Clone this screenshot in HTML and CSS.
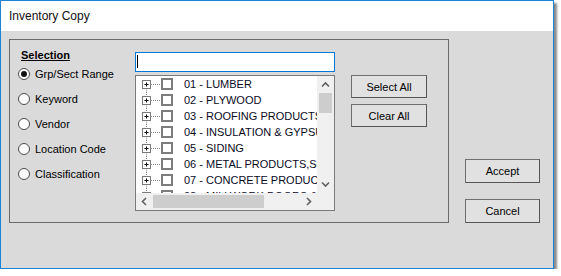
FILE: index.html
```html
<!DOCTYPE html>
<html lang="en">
<head>
  <meta charset="UTF-8">
  <title>Inventory Copy</title>
  <link rel="stylesheet" href="styles.css">
</head>
<body>

<div class="window">
  <div class="titlebar">Inventory Copy</div>

  <div class="client">
    <div class="group">
      <div class="selcol">
        <div class="sel-label">Selection</div>
        <div class="radio-row"><span class="radio checked"></span>Grp/Sect Range</div>
        <div class="radio-row"><span class="radio"></span>Keyword</div>
        <div class="radio-row"><span class="radio"></span>Vendor</div>
        <div class="radio-row"><span class="radio"></span>Location Code</div>
        <div class="radio-row"><span class="radio"></span>Classification</div>
      </div>

      <div class="midcol">
        <div class="search"><span class="caret"></span></div>
        <div class="tree">
          <div class="rows">
            <div class="node first">
              <svg class="exp" width="24" height="16" viewBox="0 0 24 16"><path d="M10.5 12.5V16M15 8.5H24" stroke="#8c8c8c" stroke-dasharray="1 1" fill="none"/><rect x="6.5" y="4.5" width="8" height="8" fill="#fff" stroke="#7a7a7a"/><path d="M8.5 8.5h4M10.5 6.5v4" stroke="#000"/></svg>
              <span class="check"></span><span class="label">01 - LUMBER</span>
            </div>
            <div class="node">
              <svg class="exp" width="24" height="16" viewBox="0 0 24 16"><path d="M10.5 0V4.5M10.5 12.5V16M15 8.5H24" stroke="#8c8c8c" stroke-dasharray="1 1" fill="none"/><rect x="6.5" y="4.5" width="8" height="8" fill="#fff" stroke="#7a7a7a"/><path d="M8.5 8.5h4M10.5 6.5v4" stroke="#000"/></svg>
              <span class="check"></span><span class="label">02 - PLYWOOD</span>
            </div>
            <div class="node">
              <svg class="exp" width="24" height="16" viewBox="0 0 24 16"><path d="M10.5 0V4.5M10.5 12.5V16M15 8.5H24" stroke="#8c8c8c" stroke-dasharray="1 1" fill="none"/><rect x="6.5" y="4.5" width="8" height="8" fill="#fff" stroke="#7a7a7a"/><path d="M8.5 8.5h4M10.5 6.5v4" stroke="#000"/></svg>
              <span class="check"></span><span class="label">03 - ROOFING PRODUCTS</span>
            </div>
            <div class="node">
              <svg class="exp" width="24" height="16" viewBox="0 0 24 16"><path d="M10.5 0V4.5M10.5 12.5V16M15 8.5H24" stroke="#8c8c8c" stroke-dasharray="1 1" fill="none"/><rect x="6.5" y="4.5" width="8" height="8" fill="#fff" stroke="#7a7a7a"/><path d="M8.5 8.5h4M10.5 6.5v4" stroke="#000"/></svg>
              <span class="check"></span><span class="label">04 - INSULATION &amp; GYPSUM</span>
            </div>
            <div class="node">
              <svg class="exp" width="24" height="16" viewBox="0 0 24 16"><path d="M10.5 0V4.5M10.5 12.5V16M15 8.5H24" stroke="#8c8c8c" stroke-dasharray="1 1" fill="none"/><rect x="6.5" y="4.5" width="8" height="8" fill="#fff" stroke="#7a7a7a"/><path d="M8.5 8.5h4M10.5 6.5v4" stroke="#000"/></svg>
              <span class="check"></span><span class="label">05 - SIDING</span>
            </div>
            <div class="node">
              <svg class="exp" width="24" height="16" viewBox="0 0 24 16"><path d="M10.5 0V4.5M10.5 12.5V16M15 8.5H24" stroke="#8c8c8c" stroke-dasharray="1 1" fill="none"/><rect x="6.5" y="4.5" width="8" height="8" fill="#fff" stroke="#7a7a7a"/><path d="M8.5 8.5h4M10.5 6.5v4" stroke="#000"/></svg>
              <span class="check"></span><span class="label">06 - METAL PRODUCTS,SCREWS</span>
            </div>
            <div class="node">
              <svg class="exp" width="24" height="16" viewBox="0 0 24 16"><path d="M10.5 0V4.5M10.5 12.5V16M15 8.5H24" stroke="#8c8c8c" stroke-dasharray="1 1" fill="none"/><rect x="6.5" y="4.5" width="8" height="8" fill="#fff" stroke="#7a7a7a"/><path d="M8.5 8.5h4M10.5 6.5v4" stroke="#000"/></svg>
              <span class="check"></span><span class="label">07 - CONCRETE PRODUCTS</span>
            </div>
            <div class="node">
              <svg class="exp" width="24" height="16" viewBox="0 0 24 16"><path d="M10.5 0V4.5M10.5 12.5V16M15 8.5H24" stroke="#8c8c8c" stroke-dasharray="1 1" fill="none"/><rect x="6.5" y="4.5" width="8" height="8" fill="#fff" stroke="#7a7a7a"/><path d="M8.5 8.5h4M10.5 6.5v4" stroke="#000"/></svg>
              <span class="check"></span><span class="label">08 - MILLWORK,DOORS &amp; WINDOWS</span>
            </div>
          </div>

          <div class="vscroll">
            <div class="sbtn"><svg width="17" height="17" viewBox="0 0 17 17"><path d="M5 10.5L8.5 7L12 10.5" stroke="#606060" stroke-width="1.6" fill="none"/></svg></div>
            <div class="vthumb"></div>
            <div class="vtrack"></div>
            <div class="sbtn"><svg width="17" height="17" viewBox="0 0 17 17"><path d="M5 6.5L8.5 10L12 6.5" stroke="#606060" stroke-width="1.6" fill="none"/></svg></div>
          </div>

          <div class="hscroll">
            <div class="sbtn"><svg width="17" height="17" viewBox="0 0 17 17"><path d="M10 5L6.5 8.5L10 12" stroke="#606060" stroke-width="1.6" fill="none"/></svg></div>
            <div class="hthumb"></div>
            <div class="htrack"></div>
            <div class="sbtn"><svg width="17" height="17" viewBox="0 0 17 17"><path d="M7 5L10.5 8.5L7 12" stroke="#606060" stroke-width="1.6" fill="none"/></svg></div>
          </div>

          <div class="corner"></div>
        </div>
      </div>

      <div class="btncol">
        <div class="btn">Select All</div>
        <div class="btn">Clear All</div>
      </div>
    </div>

    <div class="sidecol">
      <div class="btn wide">Accept</div>
      <div class="btn wide">Cancel</div>
    </div>
  </div>
</div>

</body>
</html>
```

FILE: styles.css
```css
body { margin: 0; background: #fff; font-family: "Liberation Sans", Arial, sans-serif; font-size: 11px; color: #000; }

.window { width: 552px; height: 267px; border: 1px solid #1883d7; box-shadow: 3px 3px 2px rgba(0,0,0,0.45); display: flex; flex-direction: column; }
.titlebar { height: 30px; line-height: 30px; padding-left: 8px; background: #fff; font-size: 12px; color: #111; }
.client { flex: 1; background: #dadada; display: flex; align-items: flex-start; padding: 8px 0 0 8px; }

.group { box-sizing: border-box; width: 440px; height: 184px; border: 1px solid #6b6b6b; display: flex; align-items: flex-start; }

.selcol { width: 117px; padding-left: 8px; }
.sel-label { margin: 10px 0 0 3px; line-height: 11px; font-weight: bold; text-decoration: underline; }
.radio-row { height: 25px; display: flex; align-items: center; }
.radio-row:first-of-type { margin-top: 0; }
.radio { box-sizing: border-box; width: 12px; height: 12px; margin-right: 5px; border: 1px solid #4a4a4a; border-radius: 50%; background: #fff; display: flex; align-items: center; justify-content: center; }
.radio.checked::after { content: ""; width: 6px; height: 6px; border-radius: 50%; background: #111; }

.midcol { width: 200px; margin-top: 12px; }
.search { box-sizing: border-box; height: 20px; border: 1px solid #0078d7; background: #fff; padding: 2px 0 0 1px; margin-bottom: 3px; }
.caret { display: block; width: 1px; height: 13px; background: #000; }

.tree { box-sizing: border-box; height: 136px; border: 1px solid #7a7a7a; background: #fff; display: grid; grid-template-columns: 181px 17px; grid-template-rows: 117px 17px; }
.rows { overflow: hidden; }
.node { height: 16px; display: flex; align-items: center; white-space: nowrap; }
.exp { flex: none; display: block; }
.node.first .exp path:first-child { stroke-dasharray: 1 1; }
.check { flex: none; box-sizing: border-box; width: 12px; height: 12px; margin-left: 1px; border: 2px solid #7d7d7d; background: #fff; }
.label { margin-left: 11px; line-height: 16px; color: #0a0a1e; }

.vscroll { background: #f0f0f0; display: flex; flex-direction: column; }
.hscroll { background: #f0f0f0; display: flex; }
.sbtn { flex: none; width: 17px; height: 17px; }
.sbtn svg { display: block; }
.vthumb { height: 20px; margin: 0 2px; background: #cdcdcd; }
.vtrack { flex: 1; }
.hthumb { width: 111px; margin: 2px 0; background: #cdcdcd; }
.htrack { flex: 1; }
.corner { background: #f0f0f0; }

.btncol { margin: 35px 0 0 16px; display: flex; flex-direction: column; gap: 6px; }
.sidecol { margin: 120px 0 0 16px; display: flex; flex-direction: column; gap: 16px; }

.btn { box-sizing: border-box; width: 76px; height: 23px; border: 1px solid #6f6f6f; border-right-color: #555; border-bottom-color: #555; background: #e1e1e1; display: flex; align-items: center; justify-content: center; }
.btn.wide { width: 75px; height: 24px; }
```
